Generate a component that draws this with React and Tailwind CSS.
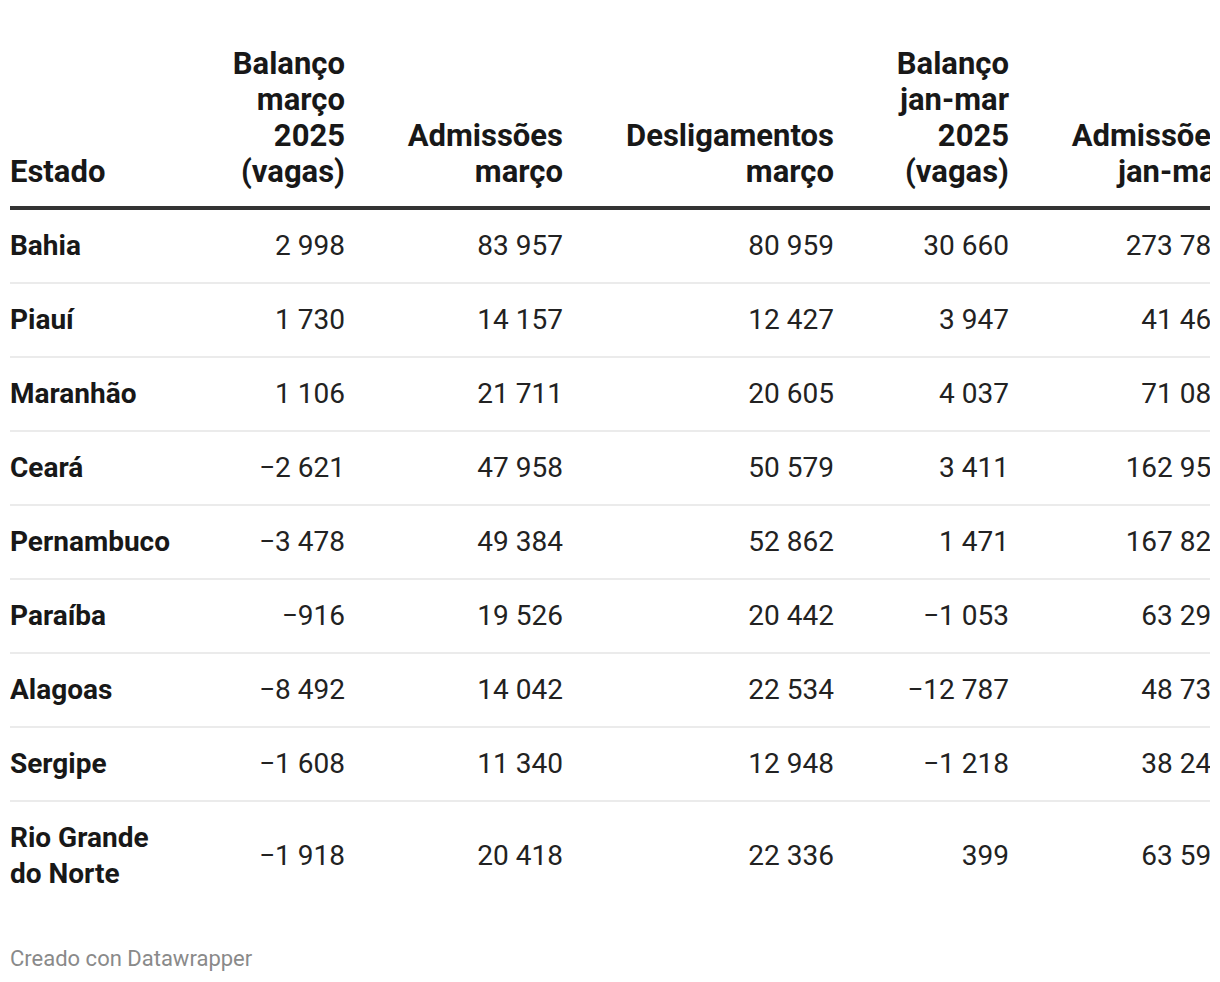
import React from "react";

const rows = [
  ["Bahia", "2 998", "83 957", "80 959", "30 660", "273 784"],
  ["Piauí", "1 730", "14 157", "12 427", "3 947", "41 468"],
  ["Maranhão", "1 106", "21 711", "20 605", "4 037", "71 084"],
  ["Ceará", "−2 621", "47 958", "50 579", "3 411", "162 959"],
  ["Pernambuco", "−3 478", "49 384", "52 862", "1 471", "167 826"],
  ["Paraíba", "−916", "19 526", "20 442", "−1 053", "63 293"],
  ["Alagoas", "−8 492", "14 042", "22 534", "−12 787", "48 734"],
  ["Sergipe", "−1 608", "11 340", "12 948", "−1 218", "38 245"],
  [["Rio Grande", "do Norte"], "−1 918", "20 418", "22 336", "399", "63 597"],
];

const headers = [
  ["Balanço", "março", "2025", "(vagas)"],
  ["Admissões", "março"],
  ["Desligamentos", "março"],
  ["Balanço", "jan-mar", "2025", "(vagas)"],
  ["Admissões", "jan-mar"],
];

const widths = ["w-[175px]", "w-[160px]", "w-[218px]", "w-[271px]", "w-[175px]", "w-[218px]"];

export default function App() {
  return (
    <div
      className="bg-white w-[1220px] h-[982px] pt-[46px] pl-[10px]"
      style={{ fontFamily: "Roboto, 'Liberation Sans', sans-serif" }}
    >
      <div className="w-[1200px] overflow-hidden">
        <table className="table-fixed border-collapse w-[1217px] text-[28px] leading-[36px]">
          <colgroup>
            {widths.map((w, i) => (
              <col key={i} className={w} />
            ))}
          </colgroup>
          <thead>
            <tr className="border-b-[4px] border-[#333333]">
              <th className="text-left align-bottom font-bold text-[31px] leading-[36px] text-[#181818] pb-[16px] pr-[10px]">
                Estado
              </th>
              {headers.map((h, i) => (
                <th
                  key={i}
                  className="text-right align-bottom font-bold text-[31px] leading-[36px] text-[#181818] pb-[16px] pl-[10px]"
                >
                  {h.map((line, j) => (
                    <div key={j}>{line}</div>
                  ))}
                </th>
              ))}
            </tr>
          </thead>
          <tbody>
            {rows.map((r, i) => (
              <tr
                key={i}
                className={i < rows.length - 1 ? "border-b-[2px] border-[#ebebeb]" : ""}
              >
                <td className="text-left align-middle font-bold text-[#181818] py-[18px] pr-[10px]">
                  {Array.isArray(r[0]) ? r[0].map((l, k) => <div key={k}>{l}</div>) : r[0]}
                </td>
                {r.slice(1).map((v, j) => (
                  <td
                    key={j}
                    className="text-right align-middle text-[#222222] py-[18px] pl-[10px] whitespace-nowrap"
                  >
                    {v}
                  </td>
                ))}
              </tr>
            ))}
          </tbody>
        </table>
      </div>
      <div className="mt-[35px] text-[22px] leading-[28px] text-[#8a8a8a]">Creado con Datawrapper</div>
    </div>
  );
}
